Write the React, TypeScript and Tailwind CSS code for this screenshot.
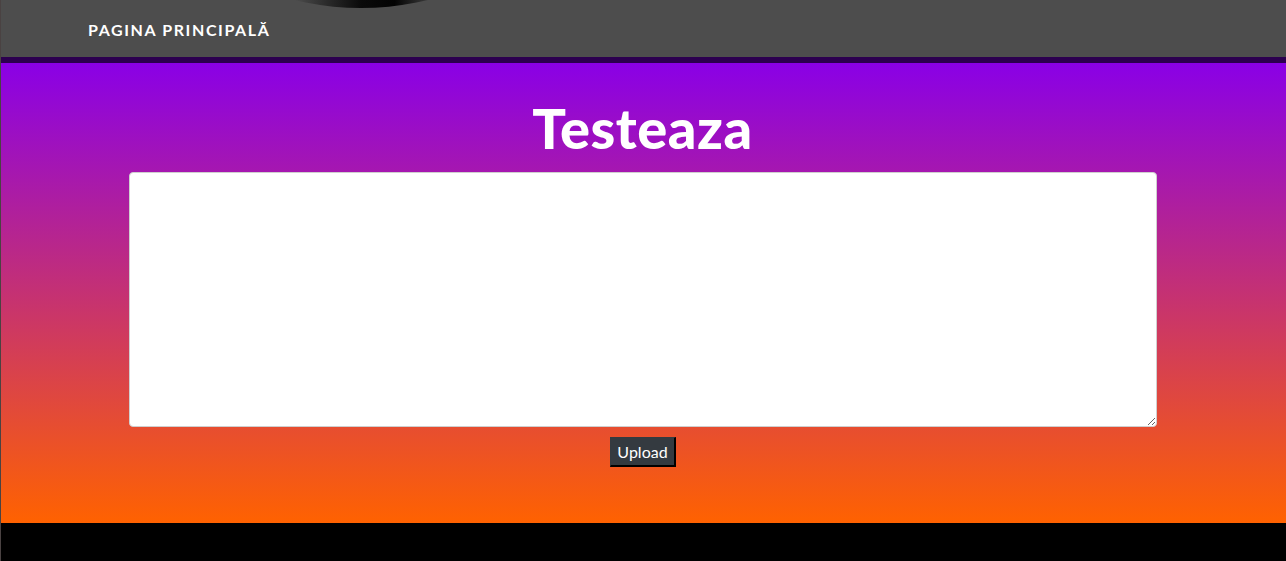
import React from 'react'

function Logo() {
  return (
    <svg className="absolute left-[210px] top-0" width="300" height="12" viewBox="0 0 300 12">
      <defs>
        <linearGradient id="lg" gradientUnits="userSpaceOnUse" x1="83" y1="0" x2="217" y2="0">
          <stop offset="0" stopColor="#4d4d4d" />
          <stop offset="0.25" stopColor="#2a2a2a" />
          <stop offset="0.5" stopColor="#0a0a0a" />
          <stop offset="0.75" stopColor="#030303" />
          <stop offset="1" stopColor="#3a3a3a" />
        </linearGradient>
      </defs>
      <circle cx="150" cy="-276" r="284" fill="url(#lg)" />
    </svg>
  )
}

export default function App() {
  return (
    <div className="min-h-[561px] flex flex-col border-l border-[#4a4242] bg-black" style={{ fontFamily: 'Lato, "Noto Sans", sans-serif' }}>
      <header className="relative h-[63px] bg-[#4d4d4d] border-b-[6px] border-[#2c004f] flex items-end">
        <Logo />
        <a href="#" className="ml-[87px] mb-[15px] text-[16px] font-bold tracking-[0.1em] text-white">
          PAGINA PRINCIPALĂ
        </a>
      </header>
      <main className="h-[460px] bg-[linear-gradient(to_bottom,#8a00e6,#ff6200)] flex flex-col items-center">
        <h1 className="mt-[25px] mb-[4px] mr-[2px] text-[56px] leading-[80px] font-black text-white tracking-[0.01em]">Testeaza</h1>
        <textarea className="w-[1028px] h-[255px] mr-[2px] bg-white rounded border border-[#cfcfcf] resize-y p-2 text-black outline-none" />
        <button className="mt-[10px] h-[30px] px-[6px] mr-[1px] bg-[#343a40] text-white text-[16px] border-t border-l border-[#343a40] border-r-2 border-b-2 border-r-black border-b-black">
          Upload
        </button>
      </main>
      <footer className="flex-1 bg-black" />
    </div>
  )
}
